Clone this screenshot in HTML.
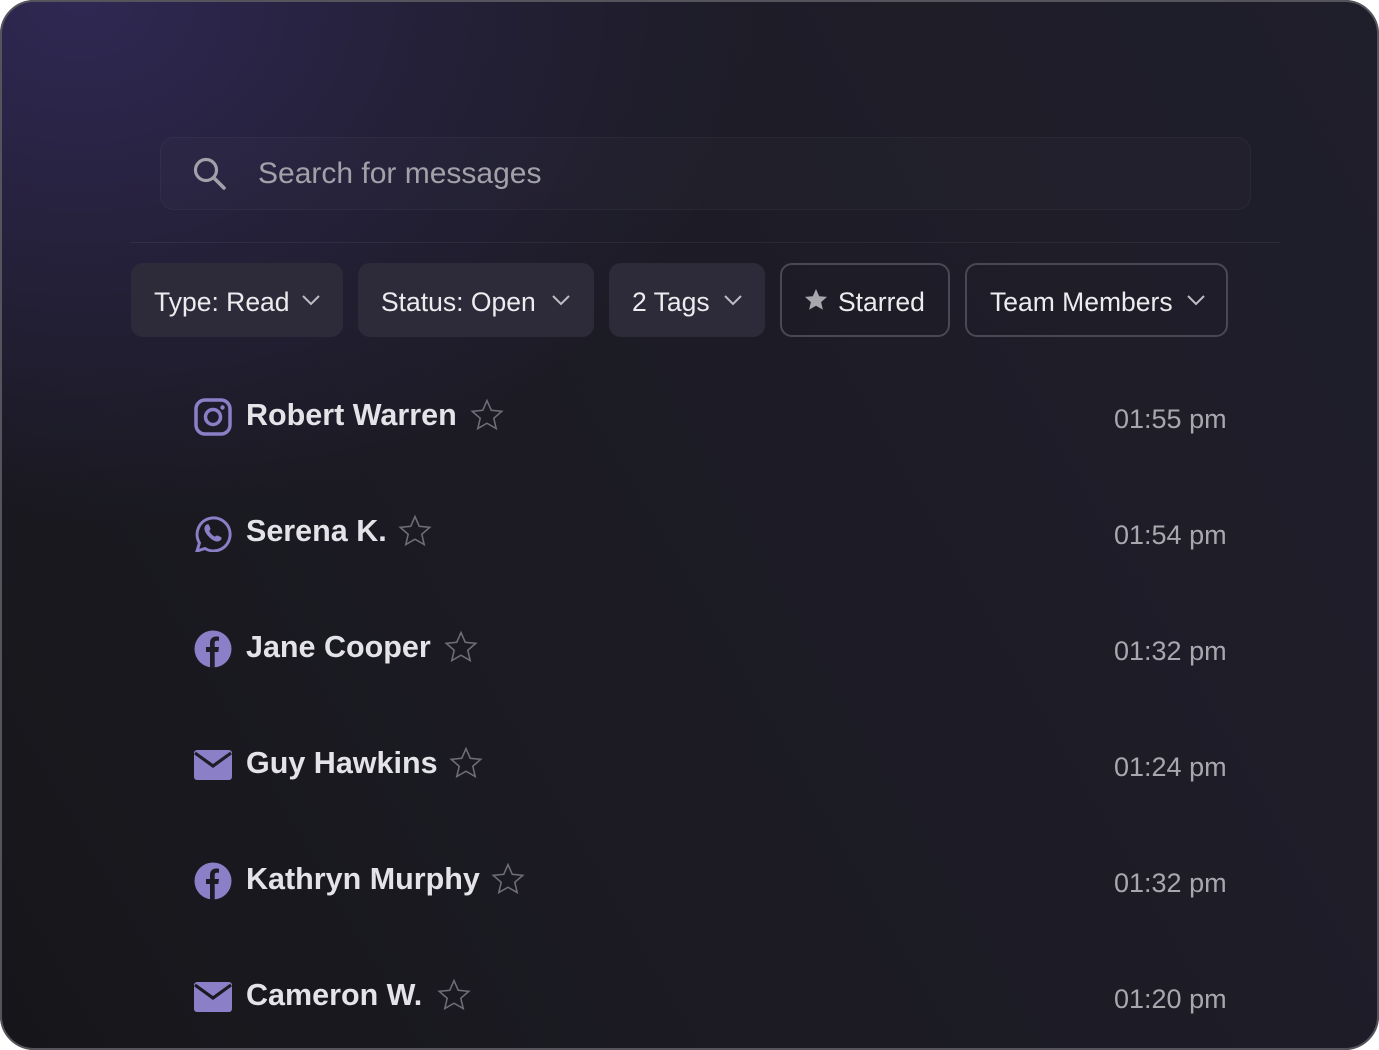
<!DOCTYPE html>
<html><head><style>
*{margin:0;padding:0;box-sizing:border-box}
html,body{width:1379px;height:1050px;background:#fff;overflow:hidden}
.f{position:absolute;left:0;top:0;width:1379px;height:1050px;border-radius:34px;overflow:hidden;
background:radial-gradient(ellipse 900px 700px at 80px 0px,#2f2853 0%,#242038 40%,rgba(30,29,42,0) 75%),linear-gradient(60deg,#16161a 0%,#1c1b24 40%,#1f1e2b 100%);font-family:"Liberation Sans",sans-serif}
.bd{position:absolute;left:0;top:0;width:1379px;height:1050px;border-radius:34px;border:2px solid #55535c;pointer-events:none}
.search{position:absolute;left:160px;top:137px;width:1091px;height:73px;border-radius:14px;border:1px solid rgba(255,255,255,0.04);background:rgba(255,255,255,0.015)}
.search span{position:absolute;left:97px;top:19px;font-size:30px;color:#a2a0a8}
.line{position:absolute;left:130px;top:242px;width:1150px;height:1px;background:rgba(255,255,255,0.06)}
.chip{position:absolute;top:263px;height:74px;border-radius:12px;background:#2d2b3a;color:#ececef;font-size:26.5px;line-height:74px;padding-top:2px;padding-left:23px;white-space:nowrap}
.chip.o{background:none;border:2px solid #4a4853;line-height:70px}
.chip svg{position:absolute;top:27px}
.row{position:absolute;left:194px;height:40px}
.row .n{position:absolute;left:52px;top:2px;font-size:30.5px;font-weight:bold;color:#e4e3e8;white-space:nowrap}
.row .ic{position:absolute;left:0;top:2px}
.t{position:absolute;left:1114px;font-size:27px;color:#a9a7ae;margin-top:2px}
</style></head><body><div class="f">
<div class="search">
<svg style="position:absolute;left:31px;top:18px" width="36" height="36" viewBox="0 0 36 36"><circle cx="14" cy="14" r="10.5" fill="none" stroke="#a2a0a8" stroke-width="3.2"/><path d="M22 22l10 10" stroke="#a2a0a8" stroke-width="3.6" stroke-linecap="round"/></svg>
<span>Search for messages</span></div>
<div class="line"></div>
<div class="chip" style="left:131px;width:212px">Type: Read<svg style="left:170px" width="20" height="20" viewBox="0 0 20 20"><path d="M2 6l8 8 8-8" fill="none" stroke="#bdbbc3" stroke-width="2"/></svg></div>
<div class="chip" style="left:358px;width:236px">Status: Open<svg style="left:193px" width="20" height="20" viewBox="0 0 20 20"><path d="M2 6l8 8 8-8" fill="none" stroke="#bdbbc3" stroke-width="2"/></svg></div>
<div class="chip" style="left:609px;width:156px">2 Tags<svg style="left:114px" width="20" height="20" viewBox="0 0 20 20"><path d="M2 6l8 8 8-8" fill="none" stroke="#bdbbc3" stroke-width="2"/></svg></div>
<div class="chip o" style="left:780px;width:170px;padding-left:56px"><svg style="left:22px;top:23px" width="24" height="24" viewBox="0 0 24 24"><path d="M12 1l3.2 7.2 7.8.7-5.9 5.2 1.8 7.7L12 17.8 5.1 21.8l1.8-7.7L1 8.9l7.8-.7z" fill="#a9a7ae"/></svg>Starred</div>
<div class="chip o" style="left:965px;width:263px">Team Members<svg style="left:219px;top:25px" width="20" height="20" viewBox="0 0 20 20"><path d="M2 6l8 8 8-8" fill="none" stroke="#bdbbc3" stroke-width="2"/></svg></div>

<div class="row" style="top:396px"><svg class="ic" width="38" height="38" viewBox="0 0 38 38"><rect x="2" y="2" width="34" height="34" rx="9" fill="none" stroke="#8b7fc7" stroke-width="3.5"/><circle cx="19" cy="19" r="7.5" fill="none" stroke="#8b7fc7" stroke-width="3.5"/><circle cx="28.5" cy="9.5" r="2.2" fill="#8b7fc7"/></svg><span class="n">Robert Warren</span></div>
<div class="row" style="top:512px"><svg class="ic" width="38" height="38" viewBox="0 0 38 38"><path d="M3 37l2.5-8A16.5 16.5 0 1 1 11 34.5z" fill="none" stroke="#8b7fc7" stroke-width="3"/><path d="M12 11c1-1 2.5-1 3 0l1.5 3.5c.3 1-1.5 2-1 3 1 2 3 4 5 5 1 .4 2-1.3 3-1l3.3 1.5c1 .5 1 2 0 3-2 2-5 2-8 0-3-2-6-5-7.5-8-1.5-3-1-5.5.7-7z" fill="#8b7fc7"/></svg><span class="n">Serena K.</span></div>
<div class="row" style="top:628px"><svg class="ic" width="38" height="38" viewBox="0 0 38 38"><circle cx="19" cy="19" r="18.5" fill="#8b7fc7"/><path d="M16 38V22h-4v-5h4v-4c0-4 2.5-6.5 6-6.5 1.6 0 3 .2 3 .2v4h-2c-2 0-2.3 1-2.3 2.3V17h4.3l-.7 5h-3.6v16z" fill="#1e1d28"/></svg><span class="n">Jane Cooper</span></div>
<div class="row" style="top:744px"><svg class="ic" width="38" height="38" viewBox="0 0 38 38"><rect x="0" y="4" width="38" height="30" rx="3" fill="#8b7fc7"/><path d="M1 7l18 13L37 7" fill="none" stroke="#1e1d28" stroke-width="3.2"/></svg><span class="n">Guy Hawkins</span></div>
<div class="row" style="top:860px"><svg class="ic" width="38" height="38" viewBox="0 0 38 38"><circle cx="19" cy="19" r="18.5" fill="#8b7fc7"/><path d="M16 38V22h-4v-5h4v-4c0-4 2.5-6.5 6-6.5 1.6 0 3 .2 3 .2v4h-2c-2 0-2.3 1-2.3 2.3V17h4.3l-.7 5h-3.6v16z" fill="#1c1b23"/></svg><span class="n">Kathryn Murphy</span></div>
<div class="row" style="top:976px"><svg class="ic" width="38" height="38" viewBox="0 0 38 38"><rect x="0" y="4" width="38" height="30" rx="3" fill="#8b7fc7"/><path d="M1 7l18 13L37 7" fill="none" stroke="#1a1a20" stroke-width="3.2"/></svg><span class="n">Cameron W.</span></div>

<svg style="position:absolute;left:470px;top:398px" width="34" height="34" viewBox="0 0 24 24"><path d="M12 1.8l3 6.9 7.4.7-5.6 4.9 1.7 7.3L12 17.8l-6.5 3.8 1.7-7.3L1.6 9.4 9 8.7z" fill="none" stroke="#6f6d78" stroke-width="1.1"/></svg>
<svg style="position:absolute;left:398px;top:514px" width="34" height="34" viewBox="0 0 24 24"><path d="M12 1.8l3 6.9 7.4.7-5.6 4.9 1.7 7.3L12 17.8l-6.5 3.8 1.7-7.3L1.6 9.4 9 8.7z" fill="none" stroke="#6f6d78" stroke-width="1.1"/></svg>
<svg style="position:absolute;left:444px;top:630px" width="34" height="34" viewBox="0 0 24 24"><path d="M12 1.8l3 6.9 7.4.7-5.6 4.9 1.7 7.3L12 17.8l-6.5 3.8 1.7-7.3L1.6 9.4 9 8.7z" fill="none" stroke="#6f6d78" stroke-width="1.1"/></svg>
<svg style="position:absolute;left:449px;top:746px" width="34" height="34" viewBox="0 0 24 24"><path d="M12 1.8l3 6.9 7.4.7-5.6 4.9 1.7 7.3L12 17.8l-6.5 3.8 1.7-7.3L1.6 9.4 9 8.7z" fill="none" stroke="#6f6d78" stroke-width="1.1"/></svg>
<svg style="position:absolute;left:491px;top:862px" width="34" height="34" viewBox="0 0 24 24"><path d="M12 1.8l3 6.9 7.4.7-5.6 4.9 1.7 7.3L12 17.8l-6.5 3.8 1.7-7.3L1.6 9.4 9 8.7z" fill="none" stroke="#6f6d78" stroke-width="1.1"/></svg>
<svg style="position:absolute;left:437px;top:978px" width="34" height="34" viewBox="0 0 24 24"><path d="M12 1.8l3 6.9 7.4.7-5.6 4.9 1.7 7.3L12 17.8l-6.5 3.8 1.7-7.3L1.6 9.4 9 8.7z" fill="none" stroke="#6f6d78" stroke-width="1.1"/></svg>

<div class="t" style="top:402px">01:55 pm</div>
<div class="t" style="top:518px">01:54 pm</div>
<div class="t" style="top:634px">01:32 pm</div>
<div class="t" style="top:750px">01:24 pm</div>
<div class="t" style="top:866px">01:32 pm</div>
<div class="t" style="top:982px">01:20 pm</div>
</div><div class="bd"></div></body></html>
